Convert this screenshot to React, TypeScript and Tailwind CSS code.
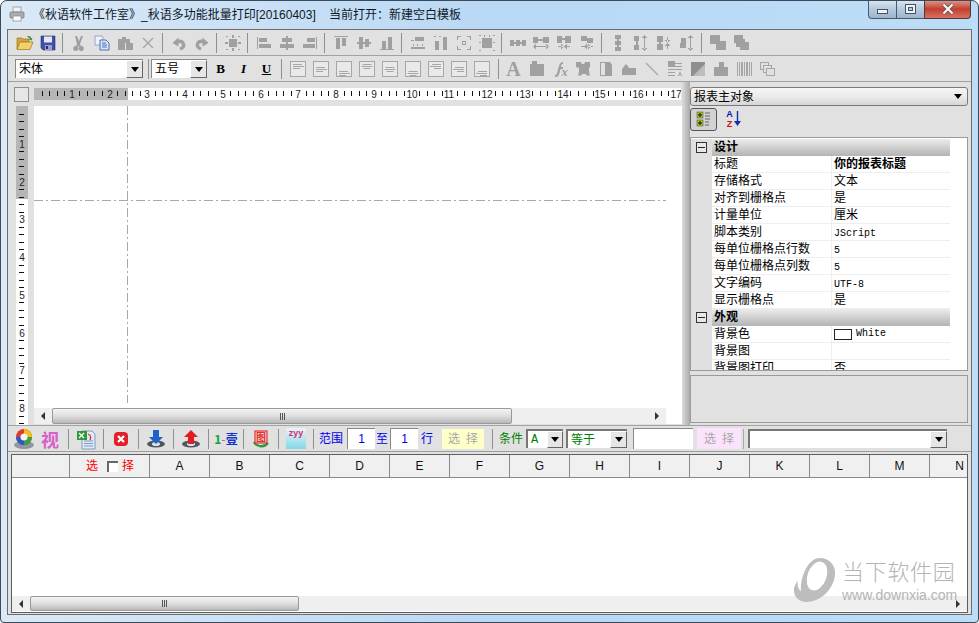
import React from "react";

const r = (x: number, y: number, w: number, h: number) => `M${x} ${y}h${w}v${h}h${-w}z`;
const rs = (...a: number[][]) => a.map((q) => r(q[0], q[1], q[2], q[3])).join("");

const GRAY: Record<string, string> = {
  cut: "M4 1h2l2 5 2-5h2l-3 8 1 2a2.5 2.5 0 1 1-2 1.5L8 10l-1 2.5A2.5 2.5 0 1 1 5 11l1-2z",
  paste: "M1 4h4V2h4v2h4v4H8v7H1z" + rs([9, 8, 7, 7]),
  comp: rs([4, 4, 8, 8], [1, 1, 2, 1], [13, 1, 2, 1], [1, 14, 2, 1], [13, 14, 2, 1], [7, 0, 2, 3], [7, 13, 2, 3], [0, 7, 3, 2], [13, 7, 3, 2]),
  al1: rs([1, 2, 1, 12], [3, 3, 8, 4], [3, 9, 12, 4]),
  al2: rs([7, 1, 2, 14], [3, 3, 10, 4], [1, 9, 14, 4]),
  al3: rs([14, 2, 1, 12], [5, 3, 8, 4], [1, 9, 12, 4]),
  at1: rs([1, 1, 14, 1], [3, 3, 4, 11], [9, 3, 4, 8]),
  at2: rs([1, 7, 14, 2], [3, 2, 4, 12], [9, 4, 4, 8]),
  at3: rs([1, 14, 14, 1], [3, 6, 4, 8], [9, 2, 4, 12]),
  sz1: rs([5, 2, 9, 4], [1, 5, 3, 1], [1, 12, 14, 2], [3, 9, 1, 2], [7, 9, 1, 2], [12, 9, 1, 2]),
  sz2: rs([2, 6, 4, 9], [10, 2, 4, 13], [1, 1, 2, 1], [6, 1, 2, 1]),
  sz3: rs([1, 1, 4, 1], [11, 1, 4, 1], [1, 14, 4, 1], [11, 14, 4, 1], [1, 1, 1, 4], [14, 1, 1, 4], [1, 11, 1, 4], [14, 11, 1, 4], [6, 6, 4, 1], [6, 9, 4, 1], [6, 6, 1, 4], [9, 6, 1, 4]),
  sz4: rs([3, 3, 10, 10], [0, 0, 2, 1], [5, 0, 1, 2], [10, 0, 1, 2], [14, 0, 2, 1], [0, 7, 2, 1], [14, 7, 2, 1], [0, 15, 2, 1], [14, 15, 2, 1]),
  h1: rs([0, 5, 4, 6], [6, 5, 4, 6], [12, 5, 4, 6], [4, 7, 2, 2], [10, 7, 2, 2]),
  h2: rs([0, 2, 5, 6], [10, 2, 6, 6], [5, 4, 5, 2], [2, 11, 12, 1]) + "M0 11.5l3-3v6zM16 11.5l-3-3v6z",
  h3: rs([1, 1, 5, 7], [9, 1, 6, 7], [6, 3, 3, 2], [2, 11, 12, 1]) + "M8 11.5l-3-3v6zM8 11.5l3-3v6z",
  h4: rs([2, 1, 6, 5], [8, 3, 6, 5], [2, 11, 12, 1]) + "M5 11.5l3-3v6zM12 11.5l-3-3v6z",
  v1: rs([5, 0, 6, 4], [5, 6, 6, 4], [5, 12, 6, 4], [7, 4, 2, 2], [7, 10, 2, 2]),
  v2: rs([1, 1, 5, 5], [1, 10, 5, 5], [3, 6, 2, 4], [11, 2, 1, 12]) + "M11.5 0l3 3h-6zM11.5 16l3-3h-6z",
  v3: rs([1, 1, 6, 6], [1, 9, 6, 6], [3, 7, 2, 2], [11, 2, 1, 12]) + "M11.5 8l3-3h-6zM11.5 8l3 3h-6z",
  v4: rs([2, 3, 5, 5], [1, 8, 6, 5], [11, 2, 1, 12]) + "M11.5 0l3 3h-6zM11.5 16l3-3h-6z",
  st1: rs([0, 0, 10, 9], [6, 6, 10, 9]),
  st2: rs([1, 0, 9, 8], [3, 4, 9, 8], [7, 7, 9, 8]),
  img: rs([1, 3, 14, 12], [3, 0, 5, 3]),
  fx: "M3 14c2 0 2-1 3-6l1-3c1-3 2-4 4-4v2c-1 0-2 0-2 3H11v2H8.500l-1 4c-1 3-2 4-4.500 4zM10 9h2l1 2 2-2h1l-2.500 3 1.500 3h-2l-1-2-2 2H9l3-3z",
  bear: "M1 1h5l1 2h2l1-2h5v5l-1 1v4l1 3-3 1-1-2H7l-1 2-3-1 1-3V7L1 6z",
  doc: rs([2, 1, 5, 1], [2, 1, 1, 14], [2, 14, 12, 1]) + "M7 1h5l2 3v11H7z",
  shape: "M1 14V8l4-5 4 5v6z" + rs([8, 7, 7, 7]),
  block: rs([1, 6, 14, 9], [6, 1, 5, 5]),
  imgtxt: rs([1, 0, 7, 6], [8, 2, 7, 1], [8, 5, 7, 1], [1, 8, 14, 1], [1, 11, 7, 1], [1, 14, 7, 1]) + "M11 15l2-5 2 5h-1l-1-2-1 2z",
};

function Gray({ n }: { n: string }) {
  return (
    <svg width="16" height="16" viewBox="0 0 16 16">
      <path d={GRAY[n]} fill="#a0a0a0" />
    </svg>
  );
}

function Para({ v, h }: { v: number; h: number }) {
  const y = [3, 6, 10][v];
  const w = [9, 11, 7];
  return (
    <svg width="16" height="16" viewBox="0 0 16 16">
      <rect x=".5" y=".5" width="15" height="15" fill="#e9e9e9" stroke="#a6a6a6" />
      {w.map((l, i) => (
        <rect key={i} x={h === 0 ? 3 : h === 1 ? 8 - l / 2 : 13 - l} y={y + i * 2} width={l} height="1" fill="#a6a6a6" />
      ))}
    </svg>
  );
}

const IOpen = () => (
  <svg width="18" height="16" viewBox="0 0 18 16">
    <path d="M1 3h5l1 1h6v3H5l-3 7H1z" fill="#d9a63a" stroke="#8a6a20" strokeWidth=".6" />
    <path d="M4 7h13l-3 7.500H1z" fill="#f2d06a" stroke="#9a7420" strokeWidth=".7" />
    <path d="M11 1.500c2-1 4 0 4.500 2l1-.5-1 2.500-2.500-1 1-.5c-.5-1-1.500-1.800-3-2.500z" fill="#3f8a3a" />
  </svg>
);
const ISave = () => (
  <svg width="16" height="16" viewBox="0 0 16 16">
    <path d="M1 1h14v14H3l-2-2z" fill="#3d4fb0" stroke="#27306f" strokeWidth=".6" />
    <rect x="4" y="1.500" width="8" height="6" fill="#e8e8f4" />
    <rect x="5" y="10" width="7" height="5" fill="#9aa0c8" />
    <rect x="6" y="11" width="2" height="3" fill="#2a2f60" />
  </svg>
);
const ICopy = () => (
  <svg width="16" height="16" viewBox="0 0 16 16">
    <path d="M1 1h7l1 2v7H1z" fill="#eef2fa" stroke="#7f93c0" strokeWidth=".8" />
    <path d="M6 5h6l3 3v7H6z" fill="#d8e4f8" stroke="#3f66ae" strokeWidth=".9" />
    <path d="M8 8h4M8 10h5M8 12h5" stroke="#3f66ae" strokeWidth=".9" />
  </svg>
);
const IDel = () => (
  <svg width="14" height="14" viewBox="0 0 14 14">
    <path d="M2 2l10 10M12 2L2 12" stroke="#a6a6a6" strokeWidth="1.400" />
  </svg>
);
const IUndo = ({ flip }: { flip?: boolean }) => (
  <svg width="16" height="16" viewBox="0 0 16 16" className={flip ? "-scale-x-100" : ""}>
    <path d="M9 14c3-1 4-3 3.500-5C12 6.500 9 5.500 5.500 7" fill="none" stroke="#a0a0a0" strokeWidth="3.400" />
    <path d="M1.500 8l6-5.500v9z" fill="#a0a0a0" />
  </svg>
);

const Sep = ({ c = "ml-[3px] mr-[4px]" }: { c?: string }) => <div className={`w-px h-[20px] bg-[#8f8f8f] shrink-0 ${c}`} />;
const B = ({ children }: { children: React.ReactNode }) => (
  <div className="w-[23px] h-[22px] flex items-center justify-center shrink-0">{children}</div>
);

const gs = (...n: string[]) => n.map((k) => <B key={k}><Gray n={k} /></B>);

function Arrow() {
  return <div className="w-0 h-0 border-x-[4px] border-x-transparent border-t-[5px] border-t-black" />;
}

function DropBtn({ w = "w-[17px]" }: { w?: string }) {
  return (
    <div className={`${w} h-full bg-[#e6e6e6] border border-t-white border-l-white border-r-[#666] border-b-[#666] flex items-center justify-center shrink-0`}>
      <Arrow />
    </div>
  );
}

function Combo({ text, w, btn = "w-[17px]", cls = "", edge = "border-l border-t border-l-[#888] border-t-[#888]" }: { text: string; w: string; btn?: string; cls?: string; edge?: string }) {
  return (
    <div className={`${w} h-[19px] bg-white flex items-center shrink-0 ${edge} ${cls}`}>
      <span className="flex-1 pl-[3px] text-[12px] leading-none whitespace-nowrap">{text}</span>
      <DropBtn w={btn} />
    </div>
  );
}

const THICK = "border-l-2 border-t-2 border-l-[#777] border-t-[#777]";

function HRuler() {
  const w = 647;
  const step = 37.75 / 5;
  const ticks: React.ReactNode[] = [];
  for (let i = 1; i * step < w - 2; i++) {
    const x = Math.round(i * step);
    if (i % 5 === 0) {
      ticks.push(
        <text key={i} x={x} y="9.500" fontSize="10" textAnchor="middle" fontFamily="Liberation Sans" fill="#222">
          {i / 5}
        </text>
      );
    } else ticks.push(<rect key={i} x={x} y="3" width="1" height="5" fill="#111" />);
  }
  return (
    <svg width={w} height="12" className="block">
      <rect width={w} height="12" fill="#fff" />
      <rect width="94" height="12" fill="#b6b6b6" />
      {ticks}
    </svg>
  );
}

function VRuler() {
  const h = 319;
  const step = 37.75 / 5;
  const ticks: React.ReactNode[] = [];
  for (let i = 1; i * step < h; i++) {
    const y = Math.round(i * step);
    if (i % 5 === 0) {
      ticks.push(
        <text key={i} x="6" y={y + 4} fontSize="10" textAnchor="middle" fontFamily="Liberation Sans" fill="#222">
          {i / 5}
        </text>
      );
    } else ticks.push(<rect key={i} x="3" y={y} width="5" height="1" fill="#111" />);
  }
  return (
    <svg width="12" height={h} className="block">
      <rect width="12" height={h} fill="#fff" />
      <rect width="12" height="93" fill="#b6b6b6" />
      {ticks}
    </svg>
  );
}

function Thumb({ w }: { w: string }) {
  return (
    <div className={`${w} h-full rounded-[2px] border border-[#9a9a9a] bg-gradient-to-b from-[#f4f4f4] via-[#dedede] to-[#b9b9b9] flex items-center justify-center gap-px shrink-0`}>
      <div className="w-px h-[7px] bg-[#555]" />
      <div className="w-px h-[7px] bg-[#555]" />
      <div className="w-px h-[7px] bg-[#555]" />
    </div>
  );
}
const Tri = ({ dir }: { dir: "l" | "r" }) => (
  <div className={dir === "l" ? "w-0 h-0 border-y-[4px] border-y-transparent border-r-[4px] border-r-[#333]" : "w-0 h-0 border-y-[4px] border-y-transparent border-l-[4px] border-l-[#333]"} />
);

const Prop = ({ k, children, bold }: { k: string; children?: React.ReactNode; bold?: boolean }) => (
  <div className="flex h-[17px] bg-white">
    <div className="w-[21px] bg-[#e0e0e0] shrink-0" />
    <div className="w-[120px] border-b border-r border-[#eeeeee] pl-[2px] text-[12px] leading-[16px] shrink-0">{k}</div>
    <div className={`w-[118px] border-b border-[#eeeeee] pl-[2px] text-[12px] leading-[16px] shrink-0 ${bold ? "font-bold" : ""}`}>{children}</div>
  </div>
);
const Sec = ({ t }: { t: string }) => (
  <div className="flex h-[17px] bg-white">
    <div className="w-[21px] bg-[#e0e0e0] shrink-0 flex items-center justify-center">
      <div className="w-[11px] h-[11px] border border-[#333] bg-[#e8e8e8] flex items-center justify-center">
        <div className="w-[7px] h-px bg-[#222]" />
      </div>
    </div>
    <div className="w-[238px] pl-[2px] text-[12px] leading-[16px] font-bold bg-gradient-to-b from-[#ececec] to-[#b4b4b4] shrink-0">{t}</div>
  </div>
);
const Mono = ({ children }: { children: React.ReactNode }) => (
  <span className="font-['Liberation_Mono',monospace] text-[10px]">{children}</span>
);

const Sunken = ({ w, children, cls = "" }: { w: string; children?: React.ReactNode; cls?: string }) => (
  <div className={`${w} h-[21px] bg-white border-l border-t border-[#888] flex items-center justify-center text-[12px] shrink-0 ${cls}`}>{children}</div>
);

const BTN = "w-[26px] h-[24px] flex items-center justify-center shrink-0";

export default function App() {
  const cols = ["A", "B", "C", "D", "E", "F", "G", "H", "I", "J", "K", "L", "M", "N"];
  return (
    <div className="relative w-[979px] h-[623px] overflow-hidden bg-white">
      <div className="w-full h-full flex flex-col rounded-t-[7px] rounded-b-[4px] border border-[#3a4a58] bg-gradient-to-r from-[#dbe9f6] via-[#b9d8f5] to-[#bcdcf8] text-black font-['Liberation_Sans','Noto_Sans_CJK_SC',sans-serif] overflow-hidden">
        {/* title */}
        <div className="h-[28px] flex items-start shrink-0 relative">
          <div className="w-[8px] shrink-0" />
          <div className="mt-[5px] w-[16px] h-[16px] flex items-center justify-center shrink-0">
            <svg width="16" height="16" viewBox="0 0 16 16">
              <rect x="4" y="1" width="8" height="5" fill="#f2f2f2" stroke="#8a8a8a" strokeWidth=".7" />
              <rect x="1" y="6" width="14" height="6" rx="1" fill="#a9aeb4" stroke="#6f757c" strokeWidth=".7" />
              <rect x="4" y="10" width="8" height="5" fill="#fafafa" stroke="#8a8a8a" strokeWidth=".7" />
            </svg>
          </div>
          <div className="ml-[8px] mt-[6px] text-[12px] leading-[16px] text-[#101828] whitespace-nowrap flex">
            <span className="w-[296px]">《秋语软件工作室》_秋语多功能批量打印[20160403]</span>
            <span>当前打开：新建空白模板</span>
          </div>
          <div className="ml-auto mr-[7px] flex h-[19px] -mt-px shrink-0">
            <div className="w-[29px] rounded-bl-[4px] border border-t-0 border-[#4c5866] bg-gradient-to-b from-[#dbe7f3] via-[#b6cadf] to-[#9db4cb] flex items-center justify-center">
              <div className="w-[11px] h-[5px] mt-[5px] bg-[#eef3f8] border border-[#46525e]" />
            </div>
            <div className="w-[27px] border-b border-[#4c5866] bg-gradient-to-b from-[#dbe7f3] via-[#b6cadf] to-[#9db4cb] flex items-center justify-center">
              <div className="w-[11px] h-[10px] bg-[#eef3f8] border border-[#46525e] flex items-center justify-center">
                <div className="w-[5px] h-[4px] border border-[#46525e] bg-[#b6cadf]" />
              </div>
            </div>
            <div className="w-[47px] rounded-br-[4px] border border-t-0 border-[#4c3a3a] bg-gradient-to-b from-[#dc9a8e] via-[#c23e30] to-[#d9705f] flex items-center justify-center">
              <svg width="14" height="12" viewBox="0 0 14 12">
                <path d="M2.500 1.500l9 9M11.500 1.500l-9 9" stroke="#4a4a4a" strokeWidth="3.600" />
                <path d="M2.500 1.500l9 9M11.500 1.500l-9 9" stroke="#f4f4f4" strokeWidth="2.400" />
              </svg>
            </div>
          </div>
        </div>

        {/* client */}
        <div className="flex-1 mx-[6px] mb-[7px] border border-[#6d6d6d] bg-[#e1e1e1] flex flex-col min-h-0">
          {/* toolbar 1 */}
          <div className="h-[26px] border-b border-[#a2a2a2] flex items-center pl-[5px] shrink-0">
            <B><IOpen /></B>
            <B><ISave /></B>
            <Sep />
            <B><Gray n="cut" /></B>
            <B><ICopy /></B>
            <B><Gray n="paste" /></B>
            <B><IDel /></B>
            <Sep />
            <B><IUndo /></B>
            <B><IUndo flip /></B>
            <Sep />
            <B><Gray n="comp" /></B>
            <Sep />
            {gs("al1", "al2", "al3")}
            <Sep />
            {gs("at1", "at2", "at3")}
            <Sep />
            {gs("sz1", "sz2", "sz3", "sz4")}
            <Sep />
            {gs("h1", "h2", "h3", "h4")}
            <Sep />
            {gs("v1", "v2", "v3", "v4")}
            <Sep />
            {gs("st1", "st2")}
          </div>

          {/* toolbar 2 */}
          <div className="h-[26px] border-b border-[#a2a2a2] flex items-center pl-[7px] shrink-0">
            <Combo text="宋体" w="w-[128px]" />
            <Sep c="ml-[5px] mr-[2px]" />
            <Combo text="五号" w="w-[56px]" />
            <div className="w-[2px]" />
            {["B", "I", "U"].map((t) => (
              <B key={t}>
                <span className={`font-['Liberation_Serif',serif] text-[13px] font-bold ${t === "I" ? "italic" : ""} ${t === "U" ? "underline" : ""}`}>{t}</span>
              </B>
            ))}
            <Sep c="ml-[3px] mr-[4px]" />
            {[0, 1, 2].flatMap((h) =>
              [0, 1, 2].map((v) => (
                <B key={`${h}${v}`}>
                  <Para v={v} h={h} />
                </B>
              ))
            )}
            <Sep c="ml-[5px] mr-[3px]" />
            <B>
              <span className="font-['Liberation_Serif',serif] font-bold text-[20px] leading-none text-[#a0a0a0]">A</span>
            </B>
            {gs("img", "fx", "bear", "doc", "shape")}
            <B>
              <svg width="16" height="16" viewBox="0 0 16 16">
                <path d="M2 2l12 12" stroke="#a6a6a6" strokeWidth="1.300" />
              </svg>
            </B>
            {gs("imgtxt")}
            <B>
              <svg width="16" height="16" viewBox="0 0 16 16">
                <rect x="1" y="1" width="14" height="14" fill="#8f8f8f" />
                <path d="M15 3v12H3z" fill="#bdbdbd" />
              </svg>
            </B>
            {gs("block")}
            <B>
              <svg width="16" height="16" viewBox="0 0 16 16">
                <path d={rs([1, 1, 1, 14], [3, 1, 1, 14], [5, 1, 2, 14], [8, 1, 1, 14], [10, 1, 2, 14], [13, 1, 1, 14], [15, 1, 1, 14])} fill="#a6a6a6" />
              </svg>
            </B>
            <B>
              <svg width="16" height="16" viewBox="0 0 16 16" fill="none" stroke="#a6a6a6">
                <rect x="1.500" y="1.500" width="8" height="7" />
                <rect x="4.500" y="4.500" width="8" height="7" fill="#e1e1e1" />
                <rect x="7.500" y="7.500" width="8" height="7" fill="#e1e1e1" />
              </svg>
            </B>
          </div>

          {/* main */}
          <div className="h-[344px] border-b border-[#a2a2a2] flex shrink-0">
            {/* designer */}
            <div className="w-[674px] flex flex-col shrink-0">
              <div className="h-[24px] flex shrink-0">
                <div className="w-[26px] shrink-0 pl-[6px] pt-[5px]">
                  <div className="w-[15px] h-[15px] border border-[#8f8f8f] bg-[#e6e6e6]" />
                </div>
                <div className="pt-[6px]">
                  <HRuler />
                </div>
              </div>
              <div className="flex-1 flex min-h-0">
                <div className="w-[26px] shrink-0 pl-[8px]">
                  <VRuler />
                </div>
                <div className="flex-1 flex flex-col min-w-0">
                  <div className="h-[302px] bg-white relative shrink-0">
                    <div className="absolute left-[93px] top-0 bottom-[5px] w-px bg-[repeating-linear-gradient(to_bottom,#a8a8a8_0_9px,transparent_9px_12px,#a8a8a8_12px_14px,transparent_14px_17px)]" />
                    <div className="absolute left-0 right-[16px] top-[94px] h-px bg-[repeating-linear-gradient(to_right,#a8a8a8_0_9px,transparent_9px_12px,#a8a8a8_12px_14px,transparent_14px_17px)]" />
                  </div>
                  <div className="h-[16px] flex items-stretch shrink-0 bg-white">
                    <div className="w-[632px] flex bg-[#efefef] shrink-0">
                      <div className="w-[18px] flex items-center justify-center shrink-0">
                        <Tri dir="l" />
                      </div>
                      <Thumb w="w-[460px]" />
                      <div className="flex-1" />
                      <div className="w-[18px] flex items-center justify-center shrink-0">
                        <Tri dir="r" />
                      </div>
                    </div>
                  </div>
                  <div className="flex-1" />
                </div>
              </div>
            </div>
            {/* splitter */}
            <div className="w-[8px] shrink-0 bg-gradient-to-r from-[#dcdcdc] to-[#a9a9a9]" />
            {/* right */}
            <div className="w-[278px] flex flex-col shrink-0">
              <div className="mt-[5px] h-[19px] shrink-0 rounded-[3px] border border-[#7a7a7a] bg-gradient-to-b from-[#f5f5f5] via-[#ebebeb] to-[#d6d6d6] flex items-center pl-[3px] pr-[5px]">
                <span className="flex-1 text-[12px] leading-none">报表主对象</span>
                <Arrow />
              </div>
              <div className="h-[24px] mt-[1px] flex items-center shrink-0">
                <div className="w-[27px] h-[23px] rounded-[3px] border border-[#555] bg-[#d2d2d2] flex items-center justify-center">
                  <svg width="16" height="16" viewBox="0 0 16 16">
                    <rect x="1" y="1" width="6" height="6" fill="#a8c21f" stroke="#444" strokeWidth=".5" />
                    <rect x="1" y="9" width="6" height="6" fill="#a8c21f" stroke="#444" strokeWidth=".5" />
                    <path d="M2 4h4M4 2v4M2 12h4M4 10v4" stroke="#111" />
                    <path d="M9 2h5M9 5h5M9 8h5M9 11h4M9 14h4" stroke="#666" />
                  </svg>
                </div>
                <div className="ml-[3px] w-[24px] h-[23px] flex items-center justify-center relative">
                  <span className="font-['Liberation_Sans',sans-serif] text-[9px] font-bold leading-[10px] flex flex-col items-center mr-[5px]">
                    <span className="text-[#1010c0]">A</span>
                    <span className="text-[#d01010]">Z</span>
                  </span>
                  <svg width="7" height="17" viewBox="0 0 7 17" className="absolute right-[3px] top-[3px]">
                    <path d="M3.500 0v11" stroke="#1030b0" strokeWidth="1.400" />
                    <path d="M0 10h7l-3.500 5z" fill="#1030b0" />
                  </svg>
                </div>
              </div>
              <div className="mt-[6px] h-[234px] shrink-0 border border-[#9a9a9a] bg-white overflow-hidden pt-px">
                <Sec t="设计" />
                <Prop k="标题" bold>你的报表标题</Prop>
                <Prop k="存储格式">文本</Prop>
                <Prop k="对齐到栅格点">是</Prop>
                <Prop k="计量单位">厘米</Prop>
                <Prop k="脚本类别"><Mono>JScript</Mono></Prop>
                <Prop k="每单位栅格点行数"><Mono>5</Mono></Prop>
                <Prop k="每单位栅格点列数"><Mono>5</Mono></Prop>
                <Prop k="文字编码"><Mono>UTF-8</Mono></Prop>
                <Prop k="显示栅格点">是</Prop>
                <Sec t="外观" />
                <Prop k="背景色">
                  <span className="flex items-center h-[16px] gap-[4px]">
                    <span className="w-[18px] h-[11px] border border-[#222] bg-white shrink-0" />
                    <Mono>White</Mono>
                  </span>
                </Prop>
                <Prop k="背景图" />
                <Prop k="背景图打印">否</Prop>
              </div>
              <div className="mt-[4px] h-[48px] shrink-0 border border-[#9a9a9a] bg-[#e1e1e1]" />
            </div>
          </div>

          {/* bottom toolbar */}
          <div className="h-[26px] border-b border-[#9c9c9c] flex items-center pl-[3px] shrink-0">
            <div className={BTN}>
              <svg width="22" height="22" viewBox="0 0 22 22">
                <ellipse cx="11" cy="17" rx="10" ry="4" fill="#8f97a0" />
                <circle cx="11" cy="9" r="8" fill="#e03a2a" />
                <path d="M11 9V1a8 8 0 0 1 8 8z" fill="#f0c020" />
                <path d="M11 9h8a8 8 0 0 1-8 8z" fill="#3aa040" />
                <path d="M11 9v8a8 8 0 0 1-8-8z" fill="#2a5ac8" />
                <circle cx="11" cy="9" r="3.500" fill="#f4f4f4" />
              </svg>
            </div>
            <div className={BTN}>
              <span className="text-[18px] font-bold leading-none text-[#d860c8] font-['Noto_Sans_CJK_SC',sans-serif]">视</span>
            </div>
            <Sep c="ml-[5px] mr-[4px]" />
            <div className={BTN}>
              <svg width="22" height="22" viewBox="0 0 22 22">
                <path d="M7 3h10l3 3v15H7z" fill="#dfe9f6" stroke="#7e9cc4" />
                <path d="M9 13h9M9 15.500h9M9 18h9" stroke="#7e9cc4" />
                <rect x="2" y="3" width="10" height="9" fill="#2f9a3a" />
                <path d="M4 5l5 5M9 5l-5 5" stroke="#fff" strokeWidth="1.300" />
                <path d="M13 6c3 1 3 4 2 6" stroke="#d03030" strokeWidth="1.300" fill="none" />
              </svg>
            </div>
            <Sep c="ml-[4px] mr-[4px]" />
            <div className={BTN}>
              <svg width="16" height="16" viewBox="0 0 16 16">
                <rect x="1" y="1" width="14" height="14" rx="4" fill="#e0202a" />
                <path d="M5 5l6 6M11 5l-6 6" stroke="#fff" strokeWidth="2.200" />
              </svg>
            </div>
            <Sep c="mx-[4px]" />
            <div className={BTN}>
              <svg width="20" height="20" viewBox="0 0 20 20">
                <ellipse cx="10" cy="15" rx="9" ry="3.500" fill="#50565c" />
                <ellipse cx="10" cy="15" rx="4" ry="2" fill="#d8e4ee" />
                <path d="M7 1h6v7h4l-7 7-7-7h4z" fill="#1c62c8" />
              </svg>
            </div>
            <Sep c="mx-[4px]" />
            <div className={BTN}>
              <svg width="20" height="20" viewBox="0 0 20 20">
                <ellipse cx="10" cy="15" rx="9" ry="3.500" fill="#50565c" />
                <ellipse cx="10" cy="15" rx="4" ry="2" fill="#d8e4ee" />
                <path d="M7 15V8H3l7-7 7 7h-4v7z" fill="#e01c24" />
              </svg>
            </div>
            <Sep c="mx-[4px]" />
            <div className={BTN}>
              <span className="text-[12px] leading-none whitespace-nowrap font-['Noto_Sans_CJK_SC',sans-serif]">
                <span className="text-[#10a040] font-bold">1</span>
                <span className="text-[#e05050]">-</span>
                <span className="text-[#1030d0] font-bold">壹</span>
              </span>
            </div>
            <Sep c="mx-[4px]" />
            <div className={BTN}>
              <svg width="20" height="20" viewBox="0 0 20 20">
                <path d="M3 13a8 7 0 0 0 14 1" stroke="#2f9a3a" strokeWidth="2.500" fill="none" />
                <rect x="4" y="2" width="12" height="12" fill="#f4d8d0" stroke="#e03030" strokeWidth="1.200" />
                <text x="10" y="12" fontSize="10" textAnchor="middle" fill="#e03030" fontFamily="Noto Sans CJK SC" fontWeight="700">图</text>
              </svg>
            </div>
            <Sep c="mx-[4px]" />
            <div className={BTN}>
              <div className="w-[20px] h-[21px] bg-gradient-to-b from-[#e8f4f8] to-[#80d8e8] flex flex-col items-center font-['Liberation_Sans',sans-serif] text-[9px] font-bold leading-[10px] text-[#d03070]">zyy</div>
            </div>
            <Sep c="mx-[4px]" />
            <span className="ml-px text-[12px] text-[#0000ee] w-[27px] shrink-0 leading-none">范围</span>
            <Sunken w="w-[28px]" cls="text-[#0000ee] ml-px"><span>1</span></Sunken>
            <span className="ml-px text-[12px] text-[#0000ee] w-[14px] shrink-0 leading-none">至</span>
            <Sunken w="w-[28px]" cls="text-[#0000ee]"><span>1</span></Sunken>
            <span className="ml-[3px] text-[12px] text-[#0000ee] w-[21px] shrink-0 leading-none">行</span>
            <div className="w-[42px] h-[20px] bg-[#ffffc8] flex items-center justify-center text-[12px] text-[#a8a8a8] tracking-[6px] pl-[6px] shrink-0 leading-none">选择</div>
            <Sep c="ml-[8px] mr-[6px]" />
            <span className="text-[12px] text-[#008000] w-[27px] shrink-0 leading-none">条件</span>
            <Combo text="A" w="w-[37px]" cls="text-[#008000] font-['Liberation_Mono',monospace]" btn="w-[16px]" edge={THICK} />
            <div className="w-[3px]" />
            <Combo text="等于" w="w-[61px]" cls="text-[#008000]" btn="w-[17px]" edge={THICK} />
            <div className="w-[6px]" />
            <Sunken w="w-[60px]" />
            <div className="w-[4px]" />
            <div className="w-[44px] h-[21px] bg-[#fbe4fb] flex items-center justify-center text-[12px] text-[#a8a8a8] tracking-[6px] pl-[6px] shrink-0 leading-none">选择</div>
            <div className="w-px h-[20px] bg-[#a8a8a8] ml-[2px] mr-[4px] shrink-0" />
            <Combo text="" w="w-[199px]" edge={THICK} />
          </div>

          {/* grid */}
          <div className="mt-[2px] ml-[3px] mr-[3px] h-[159px] border border-[#5e5e5e] bg-white flex flex-col overflow-hidden shrink-0">
            <div className="h-[23px] flex border-b border-[#8a8a8a] bg-[#f0f0f0] shrink-0 overflow-hidden text-[12px] leading-none text-[#111]">
              <div className="w-[58px] border-r border-[#8a8a8a] shrink-0" />
              <div className="w-[80px] border-r border-[#8a8a8a] shrink-0 flex items-center pl-[16px]">
                <span className="text-[#ff0000]">选</span>
                <span className="ml-[9px] w-[11px] h-[11px] border-l-2 border-t-2 border-l-[#666] border-t-[#666] bg-white shrink-0" />
                <span className="ml-[4px] text-[#ff0000]">择</span>
              </div>
              {cols.map((c) => (
                <div key={c} className="w-[60px] border-r border-[#8a8a8a] shrink-0 flex items-center justify-center">{c}</div>
              ))}
            </div>
            <div className="flex-1" />
            <div className="h-[15px] flex bg-[#efefef] shrink-0">
              <div className="w-[18px] flex items-center justify-center shrink-0">
                <Tri dir="l" />
              </div>
              <Thumb w="w-[269px]" />
              <div className="flex-1" />
              <div className="w-[18px] flex items-center justify-center shrink-0">
                <Tri dir="r" />
              </div>
            </div>
            <div className="h-[1px] shrink-0" />
          </div>
        </div>
      </div>

      {/* watermark */}
      <div className="absolute left-[793px] top-[557px] flex items-start pointer-events-none">
        <svg width="44" height="46" viewBox="0 0 44 46" className="shrink-0">
          <path d="M27 1c10 0 16 8 15 17-1 13-14 27-28 27C5 45 0 39 1 31 2 28 3 26 5 24c-1 4 0 8 3 10C7 20 15 1 27 1z" fill="#bdbdbd" />
          <ellipse cx="24" cy="19" rx="9.500" ry="15" transform="rotate(20 24 19)" fill="#ffffff" />
        </svg>
        <div className="ml-[5px] flex flex-col">
          <span className="text-[22px] leading-[26px] tracking-[0.7px] text-[#b4b4b4] font-light font-['Noto_Sans_CJK_SC',sans-serif] whitespace-nowrap">当下软件园</span>
          <span className="mt-[4px] text-[14px] leading-[16px] text-[#b4b4b4] font-['Liberation_Sans',sans-serif] whitespace-nowrap">www.downxia.com</span>
        </div>
      </div>
    </div>
  );
}
